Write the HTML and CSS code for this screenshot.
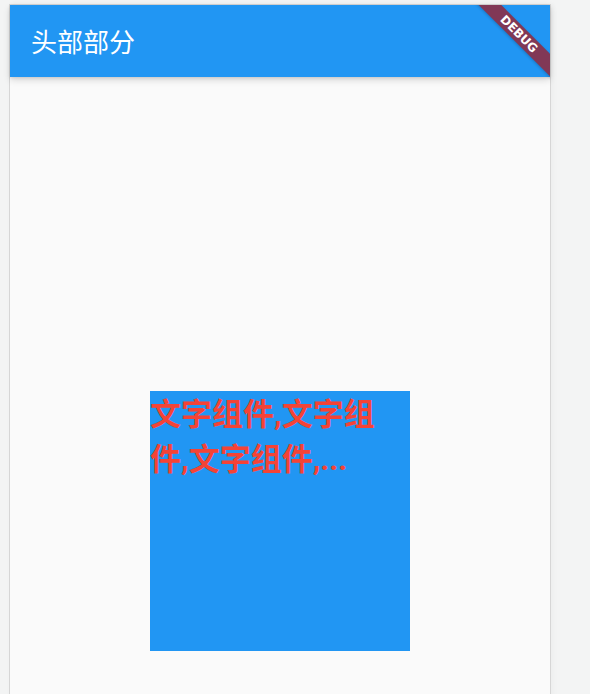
FILE: index.html
```html
<!DOCTYPE html>
<html lang="zh">
<head>
<meta charset="utf-8">
<link rel="stylesheet" href="styles.css">
</head>
<body>
<div class="frame">
  <header class="appbar">
    <h1 class="title">头部部分</h1>
    <div class="banner"><div class="band">DEBUG</div></div>
  </header>
  <main class="content">
    <div class="box">
      <p class="text">文字组件,文字组件,文字组件,...</p>
    </div>
  </main>
</div>
</body>
</html>
```

FILE: styles.css
```css
html, body {
  margin: 0;
  padding: 0;
  height: 100%;
  overflow: hidden;
}
body {
  background: #f3f4f4;
  font-family: "Noto Sans CJK SC", "Noto Sans", sans-serif;
}
.frame {
  margin: 4px 0 0 9px;
  width: 540px;
  height: 700px;
  border: 1px solid #d6d6d6;
  border-bottom: none;
  background: #fafafa;
  position: relative;
  box-shadow: 2px 0 6px rgba(0,0,0,0.03);
}
.appbar {
  height: 72px;
  background: #2196f3;
  display: flex;
  align-items: center;
  padding-left: 21px;
  box-shadow: 0 3px 7px rgba(0,0,0,0.14), 0 1px 3px rgba(0,0,0,0.10);
  position: relative;
  z-index: 1;
}
.title {
  margin: 0;
  color: #fff;
  font-size: 26px;
  font-weight: 400;
  line-height: 30px;
}
.banner {
  position: absolute;
  top: 0;
  right: 0;
  width: 80px;
  height: 80px;
  overflow: hidden;
  pointer-events: none;
}
.band {
  position: absolute;
  left: -11px;
  top: 21px;
  width: 120px;
  height: 16px;
  line-height: 16px;
  transform: rotate(45deg);
  background: #813856;
  color: #fff;
  font-family: "DejaVu Sans", sans-serif;
  font-weight: 700;
  font-size: 12px;
  text-align: center;
  box-shadow: 0 1px 3px rgba(0,0,0,0.2);
}
.content {
  display: flex;
  justify-content: center;
  padding-top: 314px;
}
.box {
  width: 260px;
  height: 260px;
  background: #2196f3;
}
.text {
  margin: 0;
  color: #f44336;
  font-family: Roboto, "Noto Sans CJK SC", sans-serif;
  font-size: 31px;
  font-weight: 700;
  line-height: 45px;
  padding-top: 1px;
}
```
